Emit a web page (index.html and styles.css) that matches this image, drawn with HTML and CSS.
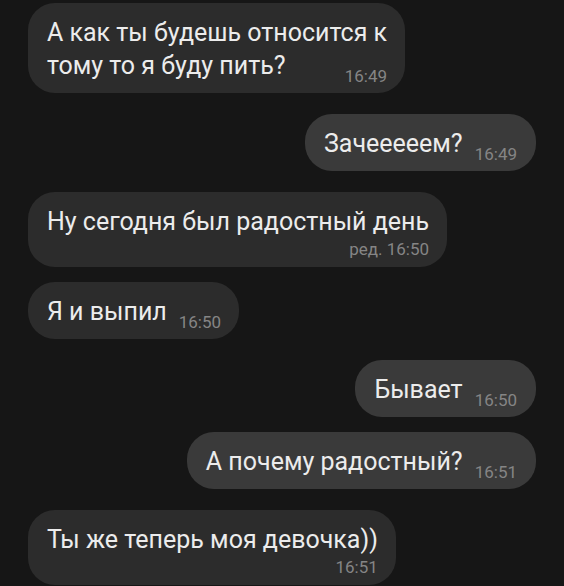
FILE: index.html
```html
<!DOCTYPE html>
<html lang="ru">
    <head>
        <meta charset="UTF-8" />
        <meta name="viewport" content="width=device-width, initial-scale=1.0" />
        <title>Чат</title>
        <link rel="stylesheet" href="styles.css">
    </head>

    <body>
        <main class="chat">
            <div class="msg in">
                А как ты будешь относится к<br>тому то я буду пить?<span class="time">16:49</span>
            </div>
            <div class="msg out">
                Зачееееем?<span class="time">16:49</span>
            </div>
            <div class="msg in stacked">
                <span class="text">Ну сегодня был радостный день</span>
                <span class="time">ред. 16:50</span>
            </div>
            <div class="msg in next">
                Я и выпил<span class="time">16:50</span>
            </div>
            <div class="msg out">
                Бывает<span class="time">16:50</span>
            </div>
            <div class="msg out next">
                А почему радостный?<span class="time">16:51</span>
            </div>
            <div class="msg in stacked">
                <span class="text">Ты же теперь моя девочка))</span>
                <span class="time">16:51</span>
            </div>
        </main>
    </body>
</html>
```

FILE: styles.css
```css
* {
    margin: 0;
    padding: 0;
    box-sizing: border-box;
}

html {
    font-family: Roboto, "Liberation Sans", sans-serif;
}

body {
    background: #161616;
    width: 564px;
    height: 586px;
    overflow: hidden;
}

.chat {
    display: flex;
    flex-direction: column;
    align-items: flex-start;
    padding: 3px 28px 0 28px;
}

/* time floats into the last line of the message */
.msg {
    margin-top: 21px;
    padding: 13px 18px 11px 19px;
    border-radius: 27px;
    background: #2c2c2c;
    color: #ececec;
    font-size: 25px;
    line-height: 33px;
}

.msg:first-child {
    margin-top: 0;
}

.msg.next {
    margin-top: 15px;
}

.msg.out {
    align-self: flex-end;
    padding-right: 19px;
    background: #3a3a3a;
}

.time {
    float: right;
    font-size: 17px;
    line-height: 20px;
    color: #858585;
    margin: 17px 0 -4px 12px;
    white-space: nowrap;
}

.stacked {
    display: flex;
    flex-direction: column;
    padding-bottom: 8px;
}

.stacked .time {
    float: none;
    align-self: flex-end;
    margin: 1px 0 0 0;
}
```
